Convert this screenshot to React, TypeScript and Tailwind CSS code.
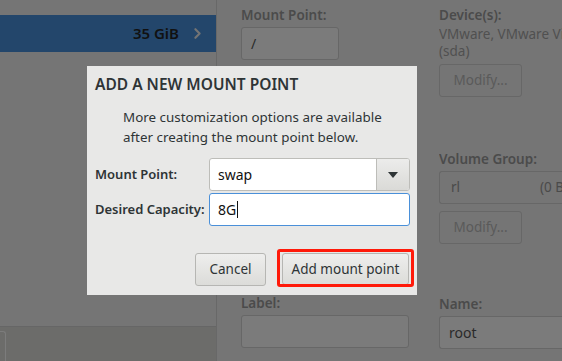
import { ChevronRight } from "lucide-react";

const font = { fontFamily: '"Noto Sans", "Open Sans", sans-serif' };

function DimInput({ value, className }: { value?: string; className: string }) {
    return (
        <div
            className={`h-[33px] rounded-[3px] border border-[#676767] bg-[#7b7b7b] px-[9px] flex items-center text-[14px] text-[#2a2a2a] ${className}`}
        >
            {value}
        </div>
    );
}

function DimButton({ className }: { className: string }) {
    return (
        <div
            className={`h-[33px] w-[83px] rounded-[3px] border border-[#676767] flex items-center justify-center text-[13.5px] text-[#5a5a5a] ${className}`}
        >
            Modify...
        </div>
    );
}

export default function App() {
    return (
        <div className="relative w-[562px] h-[361px] overflow-hidden bg-[#757575] flex" style={font}>
            {/* left: partition list */}
            <div className="w-[217px] shrink-0 border-r border-[#686868] flex flex-col pt-[15px]">
                <div className="h-[37px] bg-[#23466b] flex items-center justify-end pr-[10px] gap-[10px]">
                    <span className="text-[15px] font-semibold text-[#111]">35 GiB</span>
                    <ChevronRight className="w-[17px] h-[17px] text-[#747474]" strokeWidth={3} />
                </div>
                <div className="flex-1" />
                <div className="h-[35px] border-t border-[#666] bg-[#6c6c6a] pt-[4px]">
                    <div className="w-[6px] h-full rounded-tr-[3px] border-r border-t border-[#7c7c7c]" />
                </div>
            </div>

            {/* right: details */}
            <div className="flex-1 pl-[24px] flex gap-[30px] text-[13.5px] min-w-0">
                <div className="w-[168px] shrink-0 flex flex-col pt-[6px]">
                    <div className="font-semibold text-[#4b4b4b] leading-[18px]">Mount Point:</div>
                    <DimInput value="/" className="mt-[3px] w-[98px]" />
                    <div className="mt-[234px] font-semibold text-[#4b4b4b] leading-[18px]">Label:</div>
                    <DimInput className="mt-[3px] w-[168px]" />
                </div>
                <div className="flex-1 flex flex-col pt-[6px] min-w-0 overflow-hidden">
                    <div className="font-semibold text-[#4b4b4b] leading-[18px]">Device(s):</div>
                    <div className="mt-[2px] text-[#505050] leading-[17px] whitespace-nowrap">VMware, VMware Vir</div>
                    <div className="text-[#505050] leading-[17px]">(sda)</div>
                    <DimButton className="mt-[4px]" />
                    <div className="mt-[53px] font-semibold text-[#4b4b4b] leading-[18px]">Volume Group:</div>
                    <div className="mt-[3px] h-[33px] w-[160px] shrink-0 rounded-l-[3px] border border-r-0 border-[#676767] flex items-center pl-[11px] text-[#4a4a4a] whitespace-nowrap">
                        <span>rl</span>
                        <span className="ml-[80px]">(0 B</span>
                    </div>
                    <DimButton className="mt-[7px]" />
                    <div className="mt-[51px] font-semibold text-[#4b4b4b] leading-[18px]">Name:</div>
                    <DimInput value="root" className="mt-[3px] w-[160px] shrink-0 rounded-r-none border-r-0" />
                </div>
            </div>

            {/* dialog */}
            <div className="absolute left-[87px] top-[66px] w-[330px] h-[229px] bg-[#e8e8e7] text-[#2e3436] flex flex-col px-[8px] pt-[8px]">
                <div className="text-[15.5px] font-semibold leading-[20px] whitespace-nowrap">ADD A NEW MOUNT POINT</div>
                <div className="mt-[13px] pl-[28px] text-[13.4px] leading-[20px] whitespace-nowrap">
                    More customization options are available
                    <br />
                    after creating the mount point below.
                </div>
                <div className="mt-[11px] grid grid-cols-[114px_201px] gap-y-[2px] items-center">
                    <div className="text-[13px] font-semibold whitespace-nowrap">Mount Point:</div>
                    <div className="h-[33px] flex rounded-[3px] border border-[#bdbdb9] bg-white overflow-hidden">
                        <div className="flex-1 flex items-center pl-[8px] text-[14px] text-[#111]">swap</div>
                        <div className="w-[33px] border-l border-[#bdbdb9] bg-gradient-to-b from-[#ececeb] to-[#dadad7] flex items-center justify-center">
                            <svg width="10" height="6" viewBox="0 0 10 6">
                                <path d="M0 0 L10 0 L5 6 Z" fill="#2e3436" />
                            </svg>
                        </div>
                    </div>
                    <div className="text-[13px] font-semibold whitespace-nowrap">Desired Capacity:</div>
                    <div className="h-[33px] rounded-[3px] border border-[#4a90d9] bg-white flex items-center pl-[8px] text-[14px] text-[#111]">
                        8G<span className="inline-block w-px h-[17px] bg-[#111] ml-px" />
                    </div>
                </div>
                <div className="mt-[27px] flex justify-end gap-[16px]">
                    <div className="w-[71px] h-[33px] rounded-[3px] border border-[#b6b6b3] bg-gradient-to-b from-[#eeeeed] to-[#dcdcd9] flex items-center justify-center text-[13.5px]">
                        Cancel
                    </div>
                    <div className="relative w-[127px] h-[32px] rounded-[3px] border border-[#b6b6b3] bg-gradient-to-b from-[#eeeeed] to-[#dcdcd9] flex items-center justify-center text-[13.5px]">
                        Add mount point
                        <div className="absolute -left-[6px] -right-[6px] -top-[5px] -bottom-[3px] border-[3px] border-[#ff1a0a] rounded-[3px]" />
                    </div>
                </div>
            </div>
        </div>
    );
}
